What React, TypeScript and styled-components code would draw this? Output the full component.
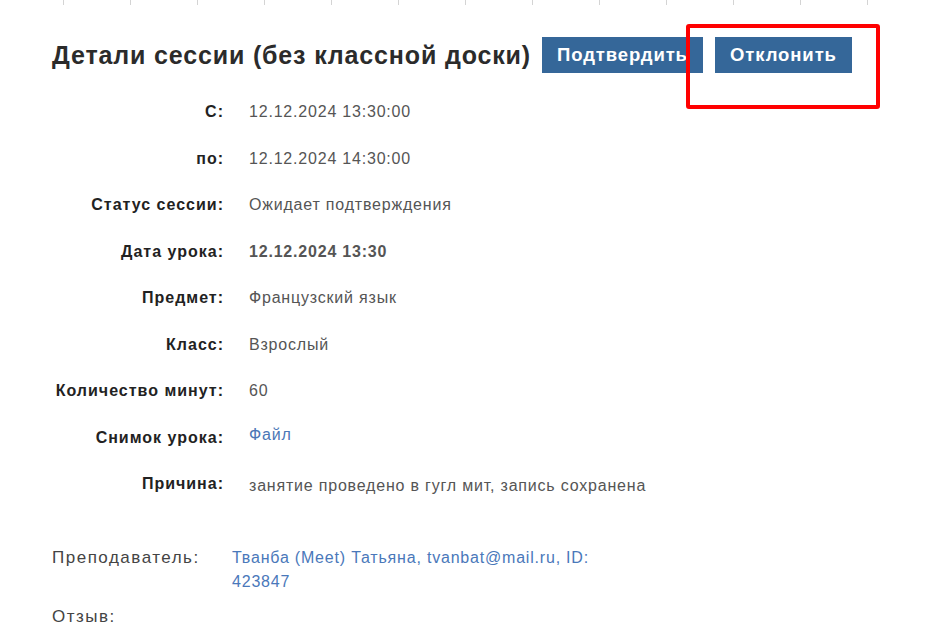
import React from "react";
import styled, { createGlobalStyle } from "styled-components";

const Global = createGlobalStyle`
  html, body { margin: 0; padding: 0; background: #ffffff; }
  body { font-family: "Liberation Sans", Arial, sans-serif; }
`;

const Page = styled.div`
  position: relative;
  width: 932px;
  height: 643px;
  overflow: hidden;
  background: #fff;
`;

const TickRow = styled.div`
  display: flex;
  padding-left: 63px;
  height: 5px;
`;

const Tick = styled.div`
  width: 67px;
  flex: none;
  height: 5px;
  border-left: 1px solid #d4d4d4;
  box-sizing: border-box;
`;

const Content = styled.div`
  padding-left: 52px;
`;

const Header = styled.div`
  display: flex;
  align-items: center;
  margin-top: 32px;
  height: 36px;
`;

const Title = styled.h2`
  margin: 0;
  font-size: 25px;
  font-weight: bold;
  letter-spacing: 0.85px;
  color: #2b2b2b;
  white-space: nowrap;
`;

const Buttons = styled.div`
  display: flex;
  gap: 12px;
  margin-left: 11px;
`;

const Button = styled.button<{ $w: number }>`
  width: ${(p) => p.$w}px;
  height: 36px;
  border: none;
  border-radius: 0;
  background: #356799;
  color: #ffffff;
  font-family: "Liberation Sans", Arial, sans-serif;
  font-size: 18.5px;
  font-weight: bold;
  letter-spacing: 0.9px;
  padding: 0;
  cursor: pointer;
`;

const Annotation = styled.div`
  position: absolute;
  left: 686px;
  top: 24px;
  width: 194px;
  height: 85px;
  box-sizing: border-box;
  border: 4px solid #ff0000;
  border-radius: 3px;
`;

const Details = styled.div`
  display: grid;
  grid-template-columns: 172px 1fr;
  column-gap: 25px;
  grid-auto-rows: 46.5px;
  margin-top: 16px;
`;

const Label = styled.div`
  text-align: right;
  white-space: nowrap;
  font-size: 16px;
  font-weight: bold;
  letter-spacing: 1px;
  color: #222;
  align-self: center;
`;

const Value = styled.div<{ $bold?: boolean; $shift?: number }>`
  font-size: 16px;
  letter-spacing: 0.8px;
  color: #555;
  font-weight: ${(p) => (p.$bold ? "bold" : "normal")};
  align-self: center;
  margin-top: ${(p) => (p.$shift ?? 0) * 2}px;
  white-space: nowrap;
`;

const Link = styled.a`
  color: #4a76b6;
  text-decoration: none;
`;

const Teacher = styled.div`
  display: grid;
  grid-template-columns: 180px 372px;
  margin-top: 38px;
  line-height: 24px;
  font-size: 16px;
  letter-spacing: 0.8px;
`;

const PlainLabel = styled.div`
  color: #444;
  font-size: 17px;
  letter-spacing: 1.5px;
  white-space: nowrap;
`;

const TeacherValue = styled.div`
  color: #4a78ba;
`;

const Review = styled(PlainLabel)`
  margin-top: 11px;
  line-height: 24px;
`;

const rows: { label: string; value: React.ReactNode; bold?: boolean; shift?: number }[] = [
  { label: "С:", value: "12.12.2024 13:30:00" },
  { label: "по:", value: "12.12.2024 14:30:00" },
  { label: "Статус сессии:", value: "Ожидает подтверждения" },
  { label: "Дата урока:", value: "12.12.2024 13:30", bold: true },
  { label: "Предмет:", value: "Французский язык" },
  { label: "Класс:", value: "Взрослый" },
  { label: "Количество минут:", value: "60" },
  { label: "Снимок урока:", value: <Link href="#">Файл</Link>, shift: -3 },
  { label: "Причина:", value: "занятие проведено в гугл мит, запись сохранена", shift: 2 },
];

export default function App() {
  return (
    <Page>
      <Global />
      <TickRow>
        {Array.from({ length: 13 }).map((_, i) => (
          <Tick key={i} />
        ))}
      </TickRow>
      <Content>
        <Header>
          <Title>Детали сессии (без классной доски)</Title>
          <Buttons>
            <Button $w={161}>Подтвердить</Button>
            <Button $w={137}>Отклонить</Button>
          </Buttons>
        </Header>
        <Details>
          {rows.map((r) => (
            <React.Fragment key={r.label}>
              <Label>{r.label}</Label>
              <Value $bold={r.bold} $shift={r.shift}>
                {r.value}
              </Value>
            </React.Fragment>
          ))}
        </Details>
        <Teacher>
          <PlainLabel>Преподаватель:</PlainLabel>
          <TeacherValue>Тванба (Meet) Татьяна, tvanbat@mail.ru, ID: 423847</TeacherValue>
        </Teacher>
        <Review>Отзыв:</Review>
      </Content>
      <Annotation />
    </Page>
  );
}
